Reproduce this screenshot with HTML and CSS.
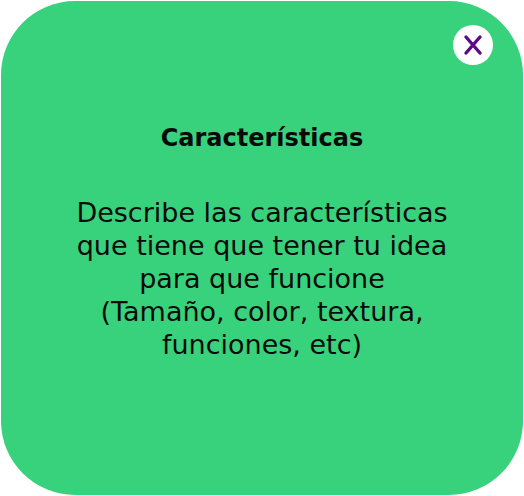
FILE: index.html
```html
<!DOCTYPE html>
<html lang="es">
<head>
<meta charset="utf-8">
<link rel="stylesheet" href="styles.css">
</head>
<body>
<div class="card">
  <div class="top">
    <button class="close" aria-label="Cerrar">
      <svg width="20" height="22" viewBox="0 0 20 22"><path d="M3 3 L17 19 M17 3 L3 19" stroke="#5a0a86" stroke-width="3.4" stroke-linecap="round" fill="none"/></svg>
    </button>
  </div>
  <h1 class="title">Características</h1>
  <p class="text">Describe las características<br>que tiene que tener tu idea<br>para que funcione<br>(Tamaño, color, textura,<br>funciones, etc)</p>
</div>
</body>
</html>
```
FILE: styles.css
```css
html, body { margin: 0; padding: 0; background: #fff; }
body { width: 524px; height: 496px; }
.card {
  margin: 1px;
  width: 522px;
  height: 494px;
  box-sizing: border-box;
  background: #38d27d;
  border-radius: 74px;
  padding: 24px 30px 0 0;
  font-family: "DejaVu Sans", sans-serif;
  color: #0a0a0a;
  text-align: center;
}
.top { display: flex; justify-content: flex-end; height: 40px; }
.close {
  width: 40px; height: 40px; border-radius: 50%;
  border: none; background: #fff; padding: 0;
  display: flex; align-items: center; justify-content: center;
}
.title {
  margin: 57px 0 0 30px;
  font-size: 24px;
  font-weight: 700;
  line-height: 32px;
}
.text {
  margin: 42px 0 0 30px;
  font-size: 27px;
  line-height: 33px;
}
```
